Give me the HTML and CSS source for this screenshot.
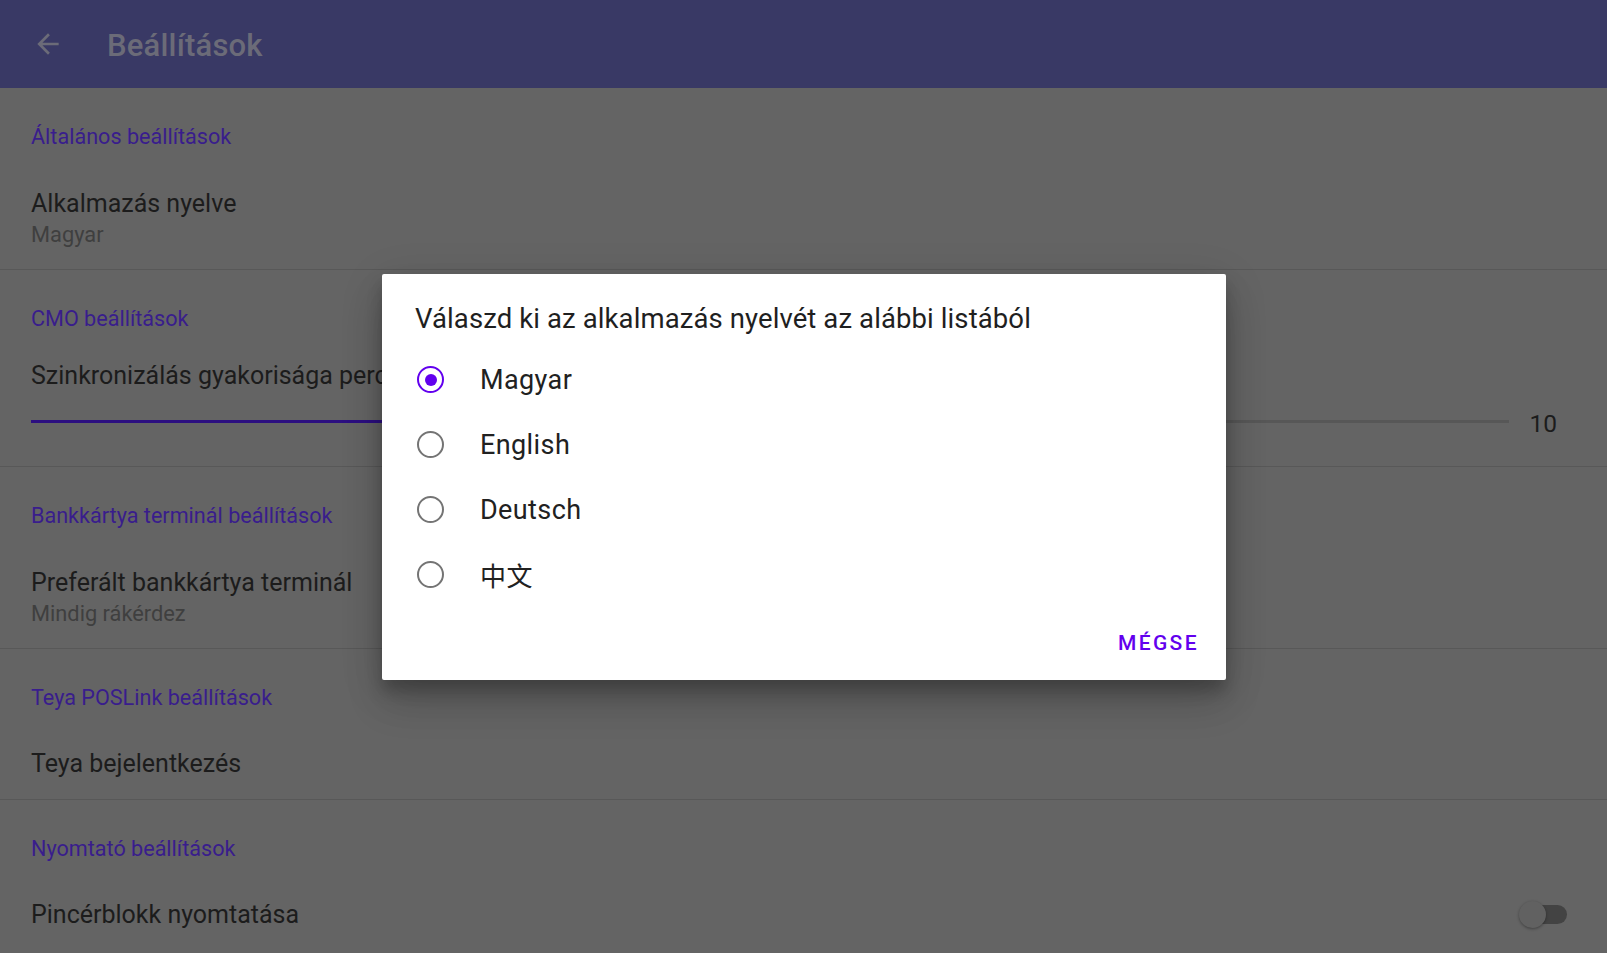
FILE: index.html
```html
<!DOCTYPE html>
<html lang="hu">
<head>
<meta charset="utf-8">
<title>Beállítások</title>
<link rel="stylesheet" href="styles.css">
</head>
<body>
<div class="app">
  <header class="toolbar">
    <svg class="back" viewBox="0 0 24 24" width="32" height="32"><path d="M20 11H7.83l5.59-5.59L12 4l-8 8 8 8 1.41-1.41L7.83 13H20v-2z" fill="currentColor"/></svg>
    <h1 class="toolbar-title">Beállítások</h1>
  </header>
  <main class="prefs">
    <section class="category">
      <div class="cat-title">Általános beállítások</div>
      <div class="pref">
        <div class="pref-title">Alkalmazás nyelve</div>
        <div class="pref-sub">Magyar</div>
      </div>
    </section>
    <section class="category">
      <div class="cat-title">CMO beállítások</div>
      <div class="pref pref-seek">
        <div class="pref-title">Szinkronizálás gyakorisága percben</div>
        <div class="seek-row">
          <div class="seek-track"><div class="seek-fill" style="width:40%"></div></div>
          <div class="seek-value">10</div>
        </div>
      </div>
    </section>
    <section class="category">
      <div class="cat-title">Bankkártya terminál beállítások</div>
      <div class="pref">
        <div class="pref-title">Preferált bankkártya terminál</div>
        <div class="pref-sub">Mindig rákérdez</div>
      </div>
    </section>
    <section class="category">
      <div class="cat-title">Teya POSLink beállítások</div>
      <div class="pref single">
        <div class="pref-title">Teya bejelentkezés</div>
      </div>
    </section>
    <section class="category last">
      <div class="cat-title">Nyomtató beállítások</div>
      <div class="pref single pref-switch">
        <div class="pref-title">Pincérblokk nyomtatása</div>
        <div class="switch"><div class="switch-track"></div><div class="switch-thumb"></div></div>
      </div>
    </section>
  </main>

  <div class="dialog">
    <div class="dialog-title">Válaszd ki az alkalmazás nyelvét az alábbi listából</div>
    <ul class="options">
      <li class="option"><span class="radio checked"></span><span class="opt-label">Magyar</span></li>
      <li class="option"><span class="radio"></span><span class="opt-label">English</span></li>
      <li class="option"><span class="radio"></span><span class="opt-label">Deutsch</span></li>
      <li class="option"><span class="radio"></span><span class="opt-label cjk">中文</span></li>
    </ul>
    <div class="dialog-actions"><span class="btn">MÉGSE</span></div>
  </div>
</div>
</body>
</html>
```
FILE: styles.css
```css
* { box-sizing: border-box; }
html, body { margin: 0; padding: 0; }
body {
  width: 1607px;
  height: 953px;
  overflow: hidden;
  background: #646464;
  font-family: Roboto, "Noto Sans", "Noto Sans CJK SC", sans-serif;
}
.app { position: relative; width: 1607px; height: 953px; }

.toolbar {
  height: 88px;
  background: #393965;
  display: flex;
  align-items: center;
  padding-left: 32px;
  color: #6b6b78;
}
.back { display: block; flex: none; }
.toolbar-title {
  margin: 2px 0 0 43px;
  font-size: 31px;
  font-weight: 500;
  color: #6b6b78;
  letter-spacing: 0.2px;
}

.prefs { display: flex; flex-direction: column; }
.category {
  padding-top: 35px;
  border-bottom: 1px solid #585858;
}
.category.last { border-bottom: none; }
.cat-title {
  padding: 0 31px;
  font-size: 21.6px;
  line-height: 28px;
  color: #391d8c;
}
.pref {
  padding: 37px 40px 20px 31px;
}
.pref.single { padding-top: 36px; padding-bottom: 19px; }
.pref-title {
  font-size: 25px;
  line-height: 32px;
  color: #1c1c1c;
}
.pref-sub {
  margin-top: 1px;
  font-size: 21.8px;
  line-height: 28px;
  color: #3f3f3f;
}
.pref-seek { padding-top: 27px; padding-right: 50px; padding-bottom: 19px; }
.seek-row {
  margin-top: 7px;
  height: 48px;
  display: flex;
  align-items: center;
  gap: 20px;
}
.seek-track {
  flex: 1;
  height: 3px;
  margin-top: -4px;
  background: #575757;
  position: relative;
}
.seek-fill { height: 3px; background: #2c0f80; }
.seek-value {
  font-size: 24.5px;
  color: #1c1c1c;
  width: 28px;
  text-align: right;
}
.pref-switch {
  display: flex;
  align-items: center;
  justify-content: space-between;
}
.switch { position: relative; width: 48px; height: 30px; }
.switch-track {
  position: absolute;
  left: 8px; right: 0; top: 5px;
  height: 19px;
  border-radius: 10px;
  background: #434343;
}
.switch-thumb {
  position: absolute;
  left: 0; top: 1px;
  width: 27px; height: 27px;
  border-radius: 50%;
  background: #616161;
  box-shadow: 0 1px 3px rgba(0,0,0,0.35);
}

.dialog {
  position: absolute;
  left: 382px;
  top: 274px;
  width: 844px;
  height: 406px;
  background: #fff;
  border-radius: 2px;
  box-shadow: 0 11px 15px rgba(0,0,0,0.2), 0 24px 38px rgba(0,0,0,0.14), 0 9px 46px rgba(0,0,0,0.12);
  padding: 27px 0 0 0;
  display: flex;
  flex-direction: column;
}
.dialog-title {
  padding: 0 33px;
  font-size: 27.5px;
  line-height: 36px;
  letter-spacing: 0.1px;
  color: #1f1f1f;
}
.options {
  list-style: none;
  margin: 10px 0 0;
  padding: 0;
}
.option {
  height: 65px;
  display: flex;
  align-items: center;
  padding-left: 35px;
}
.radio {
  width: 27px; height: 27px;
  border-radius: 50%;
  border: 2.3px solid #747474;
  display: flex;
  align-items: center;
  justify-content: center;
  flex: none;
}
.radio.checked { border-color: #6200ee; }
.radio.checked::after {
  content: "";
  width: 12px; height: 12px;
  border-radius: 50%;
  background: #6200ee;
}
.opt-label {
  margin-left: 36px;
  font-size: 27px;
  color: #212121;
  letter-spacing: 0.4px;
}
.cjk { font-family: "Noto Sans CJK SC", sans-serif; font-size: 26px; }
.dialog-actions {
  margin-top: auto;
  height: 49px;
  display: flex;
  justify-content: flex-end;
  align-items: flex-start;
  padding-right: 27px;
}
.btn {
  font-size: 21px;
  font-weight: 500;
  letter-spacing: 2.4px;
  color: #6200ee;
  line-height: 28px;
  margin-top: -2px;
}
```
